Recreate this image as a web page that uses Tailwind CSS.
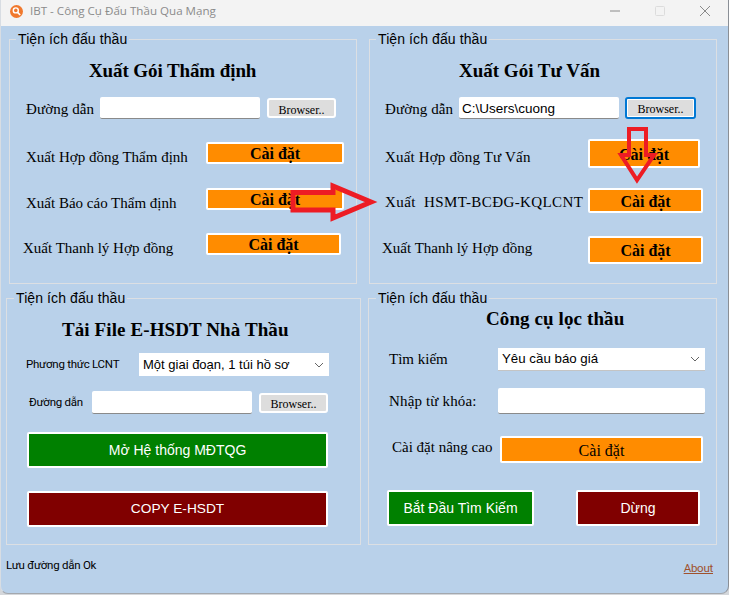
<!DOCTYPE html>
<html lang="vi">
<head>
    <meta charset="UTF-8">
    <meta name="viewport" content="width=device-width, initial-scale=1.0">
    <title>IBT - Công Cụ Đấu Thầu Qua Mạng</title>
    <script src="https://cdn.jsdelivr.net/npm/@tailwindcss/browser@4"></script>
</head>
<body class="relative w-[729px] h-[595px] overflow-hidden bg-[#d4d7db] text-black font-['Liberation_Sans',sans-serif]">
    <div class="flex flex-col w-[729px] h-[594px] rounded-b-lg bg-[#b9d1ea] border-l border-r border-b border-l-[#d8dde3] border-r-[#8a8f96] border-b-[#a4a8ae] overflow-hidden">
        <!-- Title bar -->
        <div class="flex items-center h-[26px] pb-[4px] bg-[#f3f3f3] shrink-0">
            <svg class="ml-[9px] w-[13px] h-[13px] mr-[7px]" viewBox="0 0 13 13">
                <circle cx="6.5" cy="6.5" r="6.5" fill="#f0782d"/>
                <circle cx="5.8" cy="5.4" r="2.5" fill="none" stroke="#fff" stroke-width="1.4"/>
                <path d="M7.6 7.4L10.2 10" stroke="#fff" stroke-width="1.6"/>
            </svg>
            <span class="text-[11.6px] text-[#8b8b8b] font-['Open_Sans',sans-serif]">IBT - Công Cụ Đấu Thầu Qua Mạng</span>
            <div class="ml-auto flex items-center mr-[18px] gap-[35px] -mt-[1px]">
                <svg class="w-[10px] h-[10px]" viewBox="0 0 10 10"><path d="M0 5H10" stroke="#8a8a8a"/></svg>
                <svg class="w-[10px] h-[10px]" viewBox="0 0 10 10"><rect x=".5" y=".5" width="9" height="9" rx="1" fill="none" stroke="#dcdcdc"/></svg>
                <svg class="w-[10px] h-[10px]" viewBox="0 0 10 10"><path d="M0 0L10 10M10 0L0 10" stroke="#8a8a8a"/></svg>
            </div>
        </div>

        <!-- Top row -->
        <div class="flex pl-[8px] gap-[12px] mt-[5px] shrink-0">
            <fieldset class="w-[348px] h-[253px] border border-[#dcdfe3]">
                <legend class="ml-[6px] px-[2px] text-[14px] tracking-[0.1px] leading-[16px]">Tiện ích đấu thầu</legend>
                <div class="pl-[16px]">
                    <h2 class="mt-[13px] ml-[63px] h-[22px] leading-[22px] font-['Liberation_Serif',serif] font-bold text-[19px] tracking-[-0.1px]">Xuất Gói Thẩm định</h2>
                    <div class="flex items-center h-[22px] mt-[15px] font-['Liberation_Serif',serif] text-[15px]">
                        <span class="w-[74px] pt-[3px] tracking-[0.1px]">Đường dẫn</span>
                        <input class="w-[160px] h-[22px] bg-white border-b border-[#8a8a8a] rounded-[2px]" type="text">
                        <button class="ml-[7px] w-[69px] h-[20px] pt-[1px] bg-[#dddddd] border-2 border-white rounded-[3px] text-[12px]">Browser..</button>
                    </div>
                    <div class="flex items-center h-[22px] mt-[23px] font-['Liberation_Serif',serif] text-[15px]">
                        <span class="w-[180px] pt-[9px]">Xuất Hợp đồng Thẩm định</span>
                        <button class="w-[138px] h-[22px] pt-[2px] bg-[#ff8c00] border-2 border-white rounded-[2px] font-bold text-[16px] leading-none">Cài đặt</button>
                    </div>
                    <div class="flex items-center h-[22px] mt-[24px] font-['Liberation_Serif',serif] text-[15px]">
                        <span class="w-[180px] pt-[9px]">Xuất Báo cáo Thẩm định</span>
                        <button class="w-[138px] h-[22px] pt-[2px] bg-[#ff8c00] border-2 border-white rounded-[2px] font-bold text-[16px] leading-none">Cài đặt</button>
                    </div>
                    <div class="flex items-center h-[22px] mt-[23px] -ml-[3px] font-['Liberation_Serif',serif] text-[15px]">
                        <span class="w-[183px] pt-[8px]">Xuất Thanh lý Hợp đồng</span>
                        <button class="w-[135px] h-[22px] pt-[2px] bg-[#ff8c00] border-2 border-white rounded-[2px] font-bold text-[16px] leading-none">Cài đặt</button>
                    </div>
                </div>
            </fieldset>

            <fieldset class="w-[348px] h-[253px] border border-[#dcdfe3]">
                <legend class="ml-[6px] px-[2px] text-[14px] tracking-[0.1px] leading-[16px]">Tiện ích đấu thầu</legend>
                <div class="pl-[15px]">
                    <h2 class="mt-[13px] ml-[74px] h-[22px] leading-[22px] font-['Liberation_Serif',serif] font-bold text-[19px]">Xuất Gói Tư Vấn</h2>
                    <div class="flex items-center h-[22px] mt-[15px] font-['Liberation_Serif',serif] text-[15px]">
                        <span class="w-[74px] pt-[3px] tracking-[0.1px]">Đường dẫn</span>
                        <input class="w-[160px] h-[22px] px-[3px] pt-[1px] bg-white border-b border-[#8a8a8a] rounded-[2px] text-[13.5px] font-['Liberation_Sans',sans-serif]" type="text" value="C:\Users\cuong">
                        <button class="ml-[6px] w-[71px] h-[22px] pt-[1px] bg-[#dddddd] border-2 border-[#0078d4] outline-1 -outline-offset-3 outline-white rounded-[3px] text-[12px]">Browser..</button>
                    </div>
                    <div class="flex items-center h-[29px] mt-[20px] font-['Liberation_Serif',serif] text-[15px] tracking-[0.17px]">
                        <span class="w-[203px] pt-[7px]">Xuất Hợp đồng Tư Vấn</span>
                        <button class="w-[112px] h-[29px] pt-[2px] bg-[#ff8c00] border-2 border-white rounded-[2px] font-bold text-[16px] tracking-normal leading-none">Cài đặt</button>
                    </div>
                    <div class="flex items-center h-[25px] mt-[20px] font-['Liberation_Serif',serif] text-[15px]">
                        <span class="w-[203px] pt-[3px] whitespace-pre tracking-[0.4px]">Xuất  HSMT-BCĐG-KQLCNT</span>
                        <button class="w-[115px] h-[25px] pt-[2px] bg-[#ff8c00] border-2 border-white rounded-[2px] font-bold text-[16px] leading-none">Cài đặt</button>
                    </div>
                    <div class="flex items-center h-[28px] mt-[23px] -ml-[3px] font-['Liberation_Serif',serif] text-[15px]">
                        <span class="w-[206px] pb-[3px]">Xuất Thanh lý Hợp đồng</span>
                        <button class="w-[115px] h-[28px] pt-[2px] bg-[#ff8c00] border-2 border-white rounded-[2px] font-bold text-[16px] leading-none">Cài đặt</button>
                    </div>
                </div>
            </fieldset>
        </div>

        <!-- Bottom row -->
        <div class="flex pl-[5px] gap-[7px] mt-[6px] shrink-0">
            <fieldset class="w-[355px] h-[255px] border border-[#dcdfe3]">
                <legend class="ml-[7px] px-[2px] text-[14px] tracking-[0.1px] leading-[16px]">Tiện ích đấu thầu</legend>
                <div class="pl-[20px]">
                    <h2 class="mt-[13px] ml-[35px] h-[22px] leading-[22px] font-['Liberation_Serif',serif] font-bold text-[19px] tracking-[0.1px]">Tải File E-HSDT Nhà Thầu</h2>
                    <div class="flex items-center h-[23px] mt-[12px] text-[11.5px] tracking-[-0.25px] font-['Roboto',sans-serif]">
                        <span class="w-[112px] -ml-[1px] mr-[1px]">Phương thức LCNT</span>
                        <div class="flex items-center justify-between w-[190px] h-[23px] pl-[4px] pr-[5px] bg-white text-[13px] tracking-normal font-['Liberation_Sans',sans-serif]">
                            <span>Một giai đoạn, 1 túi hồ sơ</span>
                            <svg class="w-[10px] h-[6px]" viewBox="0 0 10 6"><path d="M1 1L5 5L9 1" fill="none" stroke="#666"/></svg>
                        </div>
                    </div>
                    <div class="flex items-center h-[23px] mt-[15px] text-[11.5px] tracking-[-0.25px] font-['Roboto',sans-serif]">
                        <span class="w-[65px] pl-[2px]">Đường dẫn</span>
                        <input class="w-[160px] h-[23px] bg-white border-b border-[#8a8a8a] rounded-[2px]" type="text">
                        <button class="ml-[7px] w-[69px] h-[20px] bg-[#dddddd] border-2 border-white rounded-[3px] text-[12px] tracking-normal font-['Liberation_Serif',serif]">Browser..</button>
                    </div>
                    <button class="block w-[301px] h-[36px] mt-[18px] bg-[#008000] border-2 border-white rounded-[2px] text-white text-[14px]">Mở Hệ thống MĐTQG</button>
                    <button class="block w-[301px] h-[36px] mt-[23px] bg-[#800000] border-2 border-white rounded-[2px] text-white text-[13.7px]">COPY E-HSDT</button>
                </div>
            </fieldset>

            <fieldset class="w-[349px] h-[255px] border border-[#dcdfe3]">
                <legend class="ml-[7px] px-[2px] text-[14px] tracking-[0.1px] leading-[16px]">Tiện ích đấu thầu</legend>
                <div class="pl-[20px]">
                    <h2 class="mt-[2px] ml-[97px] h-[22px] leading-[22px] font-['Liberation_Serif',serif] font-bold text-[19px] tracking-[0.1px]">Công cụ lọc thầu</h2>
                    <div class="flex items-center h-[23px] mt-[18px] font-['Liberation_Serif',serif] text-[15px]">
                        <span class="w-[109px]">Tìm kiếm</span>
                        <div class="flex items-center justify-between w-[207px] h-[23px] pl-[4px] pr-[5px] bg-white border-b border-[#c4c4c4] text-[13.3px] font-['Liberation_Sans',sans-serif]">
                            <span>Yêu cầu báo giá</span>
                            <svg class="w-[10px] h-[6px]" viewBox="0 0 10 6"><path d="M1 1L5 5L9 1" fill="none" stroke="#666"/></svg>
                        </div>
                    </div>
                    <div class="flex items-center h-[26px] mt-[17px] font-['Liberation_Serif',serif] text-[15px]">
                        <span class="w-[109px] tracking-[0.15px]">Nhập từ khóa:</span>
                        <input class="w-[207px] h-[26px] bg-white border-b border-[#8a8a8a] rounded-[2px]" type="text">
                    </div>
                    <div class="flex items-center h-[27px] mt-[22px] font-['Liberation_Serif',serif] text-[15px]">
                        <span class="w-[111px] pl-[3px] pb-[4px]">Cài đặt nâng cao</span>
                        <button class="w-[203px] h-[27px] pt-[1px] bg-[#ff8c00] border-2 border-white rounded-[2px] text-[16px]">Cài đặt</button>
                    </div>
                    <div class="flex mt-[27px] -ml-[2px] text-white text-[14px]">
                        <button class="w-[147px] h-[36px] bg-[#008000] border-2 border-white rounded-[2px]">Bắt Đầu Tìm Kiếm</button>
                        <button class="ml-[42px] w-[124px] h-[36px] bg-[#800000] border-2 border-white rounded-[2px]">Dừng</button>
                    </div>
                </div>
            </fieldset>
        </div>

        <!-- Status line -->
        <div class="flex justify-between pl-[5px] pr-[15px] mt-[13px] text-[11.5px] tracking-[-0.25px] leading-[14px] font-['Roboto',sans-serif]">
            <span>Lưu đường dẫn Ok</span>
            <a class="mt-[3px] text-[#a0522d] underline" href="#">About</a>
        </div>
    </div>

    <!-- Red arrows drawn over the form -->
    <svg class="absolute inset-0 pointer-events-none" width="729" height="595" viewBox="0 0 729 595">
        <path d="M293 192.5H333V186L371 202L333 218V210H293Z" fill="none" stroke="#ed1c24" stroke-width="5"/>
        <path d="M629 129H646V155H654L637 180L621 155H629Z" fill="none" stroke="#ed1c24" stroke-width="4"/>
    </svg>
</body>
</html>
